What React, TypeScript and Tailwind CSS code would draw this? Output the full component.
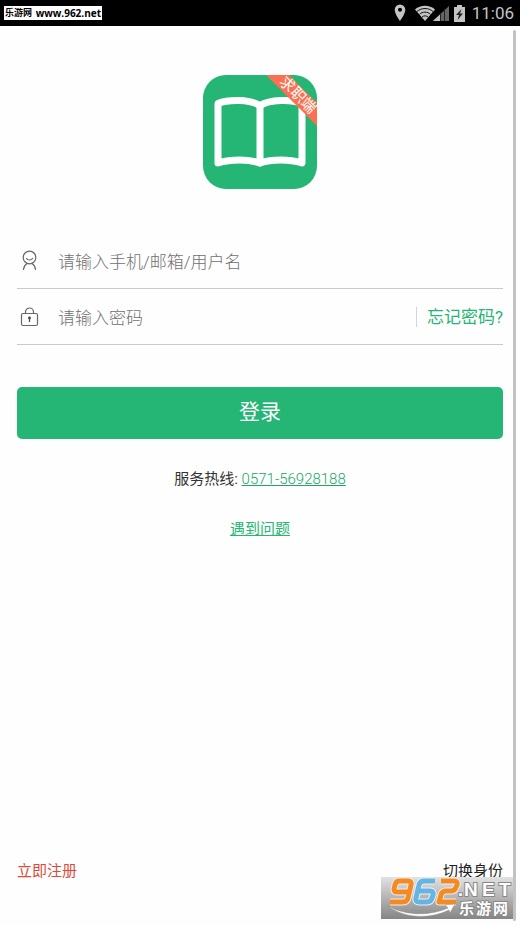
function StatusBar() {
  return (
    <header className="flex h-[26px] items-center justify-between bg-black pl-1 pr-[6px] text-[#c4c4c4]">
      <span className="flex h-[14px] w-[98px] items-center justify-between whitespace-nowrap bg-white px-px font-['Open_Sans','Noto_Sans_CJK_SC',sans-serif] text-[9px] font-bold leading-[14px] text-black">
        乐游网 <span className="text-[10px]">www.962.net</span>
      </span>
      <div className="flex items-center">
        <svg width="12" height="18" viewBox="0 0 12 18" className="mr-[9px]" fill="currentColor">
          <path
            fillRule="evenodd"
            d="M6 .5A5.3 5.3 0 0 0 .7 5.800C.7 10 6 17 6 17s5.300-7 5.300-11.200A5.300 5.300 0 0 0 6 .5ZM6 3.800a2 2 0 1 1 0 4 2 2 0 0 1 0-4Z"
          />
        </svg>
        {/* wifi + signal */}
        <svg width="34" height="16" viewBox="0 0 34 16" className="mr-[5px]">
          <path d="M0 4.500C5.500-.5 14.500-.5 20 4.500L10 16Z" fill="currentColor" />
          <g fill="none" stroke="#111" strokeWidth="1">
            <path d="M2 6.500c4.500-4 11.500-4 16 0" />
            <path d="M4.500 9.200c3-2.700 8-2.700 11 0" />
            <path d="M7 12c1.700-1.500 4.300-1.500 6 0" />
          </g>
          <path d="M18 16 34 1v15Z" fill="#666" />
          <path d="M18 16l7-6.600V16Z" fill="currentColor" />
          <path d="M25.500 8v8M29.500 4v12" stroke="#222" />
        </svg>
        <svg width="11" height="17" viewBox="0 0 11 17" className="mr-[7px]">
          <path d="M3 0h5v2h3v15H0V2h3Z" fill="currentColor" />
          <path d="M7.500 4 2 10h3l-1.500 5L9 8.500H6Z" fill="#222" />
        </svg>
        <time className="text-[17px] leading-none">11:06</time>
      </div>
    </header>
  );
}

function Logo() {
  return (
    <svg
      width="114"
      height="114"
      viewBox="0 0 114 114"
      role="img"
      aria-label="求职端"
      className="mx-auto overflow-visible"
    >
      <defs>
        <clipPath id="logo-shape">
          <rect width="114" height="114" rx="23" />
        </clipPath>
      </defs>
      <g clipPath="url(#logo-shape)">
        <rect width="114" height="114" fill="#25b574" />
        <g fill="none" stroke="#fff" strokeWidth="7" strokeLinecap="round" strokeLinejoin="round">
          <path d="M57 30.500C47 24.500 26 24 15 28.500V88c13-4 31-4 42 0 12-4 29-4 42 0V28.500C88 24 67 24.500 57 30.500Z" />
          <path d="M57 31v57" />
        </g>
        <path d="M62-1h23l30 30v23Z" fill="#fa7050" />
      </g>
      <text
        x="95"
        y="25"
        transform="rotate(45 95 20)"
        textAnchor="middle"
        fontSize="15"
        fill="#fff"
      >
        求职端
      </text>
    </svg>
  );
}

function UserIcon() {
  return (
    <svg width="26" height="24" viewBox="0 0 26 24" fill="none" stroke="#666" strokeWidth="1.200" strokeLinecap="round">
      <circle cx="12.500" cy="8.500" r="6.300" />
      <path d="M9.500 9.500c1.200 2 4.800 2 6 0M10 14.500c-2 1.200-3.200 3-3.500 6M15 14.500c2 1.200 3.200 3 3.500 6" />
    </svg>
  );
}

function LockIcon() {
  return (
    <svg width="26" height="24" viewBox="0 0 26 24" fill="none" stroke="#666" strokeWidth="1.200">
      <rect x="4.500" y="8.500" width="16" height="12" rx="1.500" />
      <path d="M8.500 8.500V7a4 4 0 0 1 8 0v1.500" />
      <circle cx="12.500" cy="13" r="1.400" fill="#444" stroke="none" />
      <path d="M12.500 13v4" stroke="#444" />
    </svg>
  );
}

function Watermark() {
  return (
    <div className="pointer-events-none absolute bottom-[6px] right-[5px]">
      <svg
        width="134"
        height="42"
        viewBox="0 1 134 42"
        className="font-['Liberation_Sans','Noto_Sans_CJK_SC',sans-serif] font-bold"
      >
        <defs>
          <linearGradient id="mark-bg" x1="0" y1="0" x2="0" y2="1">
            <stop offset="0" stopColor="#e2e2e2" />
            <stop offset="1" stopColor="#858585" />
          </linearGradient>
        </defs>
        <rect y="1" width="134" height="42" fill="url(#mark-bg)" />
        <g fill="none" strokeLinejoin="round">
          {[
            { width: 7, color: "#eee" },
            { width: 5, color: "" },
          ].map((layer) => (
            <g key={layer.width} strokeWidth={layer.width}>
              <path
                stroke={layer.color || "#f48a20"}
                d="M27 16H16q-3 0-3-3l1-4q1-4 4-4h9q4 0 3 4l-3 13q-1 4-5 4H9"
              />
              <path
                stroke={layer.color || "#65b5e4"}
                d="M54 5H43q-4 0-5 4l-3 13q-1 4 3 4h8q4 0 5-4l1-3q1-4-3-4H37"
              />
              <path
                stroke={layer.color || "#f48a20"}
                d="M60 5h13q4 0 3 4l-1 2q-1 4-5 4h-5q-4 0-5 4l-2 7h17"
              />
            </g>
          ))}
        </g>
        <path
          d="M7 30c18 10 42 10 60 2l-3-3 10-1-5 9-1-3C48 44 22 42 7 30Z"
          fill="#fff"
          stroke="#888"
          strokeWidth=".5"
        />
        <g fill="#fff" stroke="#888" strokeWidth="2" paintOrder="stroke">
          <text x="77" y="20" fontSize="18">.</text>
          <text x="83" y="20" fontSize="19">N</text>
          <text x="101" y="20" fontSize="19">E</text>
          <text x="118" y="20" fontSize="19">T</text>
          <text x="78" y="38" fontSize="15">乐</text>
          <text x="95" y="38" fontSize="15">游</text>
          <text x="112" y="38" fontSize="15">网</text>
        </g>
      </svg>
    </div>
  );
}

export default function App() {
  return (
    <div className="relative flex min-h-screen flex-col bg-[#fefefe] font-[Roboto,'Noto_Sans_CJK_SC',sans-serif]">
      <StatusBar />

      <main className="flex flex-1 flex-col px-[17px] pt-[49px]">
        <Logo />

        <form className="mt-11" onSubmit={(e) => e.preventDefault()}>
          <div className="flex h-14 items-center border-b border-[#cacaca]">
            <label htmlFor="account" aria-label="用户名">
              <UserIcon />
            </label>
            <input
              id="account"
              type="text"
              placeholder="请输入手机/邮箱/用户名"
              className="ml-[15px] min-w-0 flex-1 bg-transparent pt-1 text-[17px] font-light outline-none placeholder:text-[#707070]"
            />
          </div>
          <div className="flex h-14 items-center border-b border-[#cacaca]">
            <label htmlFor="password" aria-label="密码">
              <LockIcon />
            </label>
            <input
              id="password"
              type="password"
              placeholder="请输入密码"
              className="ml-[15px] min-w-0 flex-1 bg-transparent pt-1 text-[17px] font-light outline-none placeholder:text-[#707070]"
            />
            <a
              href="#"
              className="whitespace-nowrap border-l border-[#d4d4d4] pl-[10px] text-[17px] leading-5 text-[#25b574]"
            >
              忘记密码?
            </a>
          </div>
          <button
            type="submit"
            className="mt-[42px] h-[52px] w-full rounded-[5px] bg-[#25b574] text-[21px] text-white"
          >
            登录
          </button>
        </form>

        <p className="mt-[30px] text-center text-[15px] leading-5 text-[#333]">
          服务热线:{" "}
          <a href="tel:0571-56928188" className="font-light text-[#18a867] underline">
            0571-56928188
          </a>
        </p>
        <a
          href="#"
          className="mx-auto mt-[30px] text-[15px] leading-5 text-[#25b574] underline"
        >
          遇到问题
        </a>

        <div className="mt-auto flex justify-between pb-11 text-[15px] leading-5">
          <a href="#" className="text-[#dc4a3c]">
            立即注册
          </a>
          <a href="#" className="text-[#222]">
            切换身份
          </a>
        </div>
      </main>

      <Watermark />
      {/* scroll indicator */}
      <div className="pointer-events-none absolute bottom-1 right-1 top-[30px] w-[3px] rounded-full bg-[#c2c2c2]" />
    </div>
  );
}
